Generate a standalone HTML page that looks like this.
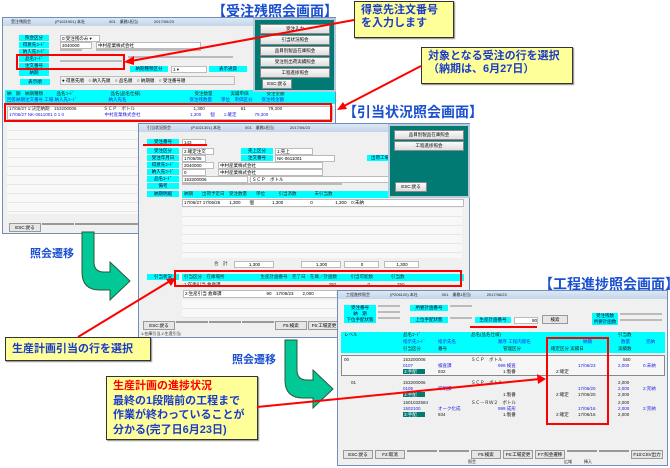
<!DOCTYPE html>
<html><head><meta charset="utf-8"><style>
*{margin:0;padding:0;box-sizing:border-box}
body{width:670px;height:468px;background:#fff;position:relative;overflow:hidden;font-family:"Liberation Sans","Noto Sans CJK JP",sans-serif}
.a{position:absolute}
.win{position:absolute;background:#f0f0f0;border:1px solid #6f8fb8}
.tb{position:absolute;left:0;right:0;top:0;height:8px;background:linear-gradient(#dce8f5,#c3d5ea);font-size:4px;line-height:8px;color:#222;padding-left:8px;white-space:nowrap}
.lb{position:absolute;background:#00ffff;font-size:4.5px;line-height:6px;text-align:center;color:#003;white-space:nowrap}
.bx{position:absolute;background:#fff;border:1px solid #bbb;font-size:4.5px;line-height:5px;padding-left:1px;white-space:nowrap}
.t{position:absolute;font-size:4.5px;line-height:6px;white-space:nowrap;color:#222}
.bl{color:#2323e0}
.hdr{position:absolute;background:#00ffff}
.btn{position:absolute;background:#e6e6e6;border:1px solid #999;font-size:4.5px;line-height:7px;text-align:center;white-space:nowrap}
.gp{position:absolute;background:#007a73;border:2px solid #b9c9d9}
.gb{position:absolute;background:linear-gradient(#fafafa,#dedede);border:1px solid #888;font-size:4.5px;text-align:center;line-height:8px}
.ttl{position:absolute;color:#1a4fd0;font-weight:bold;font-size:14px;white-space:nowrap}
.call{position:absolute;background:#ffff99;border:1px solid #333;box-shadow:1px 1px 1px #888;color:#1a3cc8;font-weight:bold;font-size:11px;line-height:13px;padding:2px 6px}
.lines{position:absolute;background:repeating-linear-gradient(#f8f8f8 0 8px,#e6e6e6 8px 9px)}
.tg{background:#007a73;color:#fff;padding:0 8px 0 1px}
</style></head><body>

<!-- window 1 -->
<div class="win" style="left:2px;top:17px;width:334px;height:217px">
 <div class="tb">受注残照会　　　　　　(P1021901) 本社　　　　　　001　業務1担当　　　　2017/06/23</div>
 <div class="lb" style="left:16px;top:17px;width:30px">照会区分</div><div class="bx" style="left:57px;top:17px;width:40px">0:受注残のみ ▾</div>
 <div class="lb" style="left:16px;top:24px;width:30px">得意先ｺｰﾄﾞ</div><div class="bx" style="left:57px;top:24px;width:32px">2040000</div><div class="bx" style="left:93px;top:24px;width:105px">中村産業株式会社</div>
 <div class="lb" style="left:16px;top:31px;width:30px">納入先ｺｰﾄﾞ</div><div class="bx" style="left:57px;top:31px;width:22px"></div><div class="bx" style="left:93px;top:31px;width:105px"></div>
 <div class="lb" style="left:16px;top:38px;width:30px">品名ｺｰﾄﾞ</div><div class="bx" style="left:125px;top:38px;width:105px;background:#f0f0f0"></div>
 <div class="lb" style="left:16px;top:45px;width:30px">注文番号</div><div class="bx" style="left:57px;top:42px;width:62px"></div>
 <div class="lb" style="left:16px;top:52px;width:30px">納期</div>
 <div class="lb" style="left:127px;top:48px;width:38px">納期種類区分</div><div class="bx" style="left:168px;top:48px;width:36px">1 ▾</div>
 <div class="lb" style="left:206px;top:48px;width:38px">表示通貨</div>
 <div class="lb" style="left:17px;top:61px;width:30px">表示順</div>
 <div class="bx" style="left:57px;top:58px;width:175px;height:9px;line-height:8px;background:#f0f0f0">● 得意先順　○ 納入先順　○ 品名順　○ 納期順　○ 受注番号順</div>
 <div class="hdr" style="left:2px;top:72px;width:330px;height:14px"></div>
 <div class="t" style="left:4px;top:73px">納　期　納期種類　　　品名ｺｰﾄﾞ　　　　　　　　品名(品名仕様)　　　　　　　　　　　　受注数量　　　　実績単価　　　　受注金額</div>
 <div class="t bl" style="left:4px;top:79px">回答納期注文番号 工場 納入先ｺｰﾄﾞ　　　　　　　納入先名　　　　　　　　　　　　　　受注残数量　　単位　単価区分　　受注残金額</div>
 <div class="bx" style="left:4px;top:88px;width:326px;height:14px;background:#fff"></div>
 <div class="t" style="left:6px;top:88px">17/06/27 1:決定納期　153200006　　　　　　ＳＣＰ　ボトル　　　　　　　　　　　　　1,300　　　　　　　　61　　　　　79,300</div>
 <div class="t bl" style="left:6px;top:94px">17/06/27 NK-0611001 0 1 0　　　　　　　　　中村産業株式会社　　　　　　　　　　　1,300　　個　　1:確定　　　　79,300</div>
 <div class="lines" style="left:4px;top:104px;width:132px;height:92px"></div>
 <div class="btn" style="left:6px;top:205px;width:32px">ESC:戻る</div>
 <div class="btn" style="left:39px;top:205px;width:32px"></div><div class="btn" style="left:72px;top:205px;width:32px"></div><div class="btn" style="left:104px;top:205px;width:32px"></div>
</div>
<div class="gp" style="left:253px;top:18px;width:83px;height:74px">
 <div class="gb" style="left:5px;top:4px;width:70px">受注入力</div>
 <div class="gb" style="left:5px;top:15px;width:70px">引当状況照会</div>
 <div class="gb" style="left:5px;top:26px;width:70px">品目別製品在庫照会</div>
 <div class="gb" style="left:5px;top:37px;width:70px">受注別出荷実績照会</div>
 <div class="gb" style="left:5px;top:48px;width:70px">工程進捗照会</div>
 <div class="gb" style="left:7px;top:59px;width:30px">ESC:戻る</div>
</div>

<!-- window 2 -->
<div class="win" style="left:138px;top:123px;width:332px;height:215px">
 <div class="tb">引当状況照会　　　　　(P1021301) 本社　　　　　　001　業務1担当　　　　2017/06/23</div>
 <div class="lb" style="left:8px;top:15px;width:32px">受注番号</div><div class="bx" style="left:43px;top:15px;width:24px">143</div>
 <div class="lb" style="left:8px;top:24px;width:32px">受注区分</div><div class="bx" style="left:43px;top:24px;width:32px">2:確定注文</div>
 <div class="lb" style="left:102px;top:24px;width:32px">売上区分</div><div class="bx" style="left:136px;top:24px;width:38px">1:売上</div>
 <div class="lb" style="left:8px;top:31px;width:32px">受注年月日</div><div class="bx" style="left:43px;top:31px;width:24px">17/06/05</div>
 <div class="lb" style="left:102px;top:31px;width:32px">注文番号</div><div class="bx" style="left:136px;top:31px;width:60px">NK-0611001</div>
 <div class="lb" style="left:228px;top:31px;width:26px">出荷工場</div>
 <div class="lb" style="left:8px;top:38px;width:32px">得意先ｺｰﾄﾞ</div><div class="bx" style="left:43px;top:38px;width:32px">2040000</div><div class="bx" style="left:79px;top:38px;width:105px">中村産業株式会社</div>
 <div class="lb" style="left:8px;top:45px;width:32px">納入先ｺｰﾄﾞ</div><div class="bx" style="left:43px;top:45px;width:24px">0</div><div class="bx" style="left:79px;top:45px;width:105px">中村産業株式会社</div>
 <div class="lb" style="left:8px;top:52px;width:32px">品名ｺｰﾄﾞ</div><div class="bx" style="left:43px;top:52px;width:66px">153200006</div><div class="bx" style="left:111px;top:52px;width:140px">ＳＣＰ　ボトル</div>
 <div class="lb" style="left:8px;top:59px;width:32px">備考</div><div class="bx" style="left:43px;top:59px;width:160px"></div>
 <div class="lb" style="left:8px;top:67px;width:32px">納期明細</div>
 <div class="hdr" style="left:43px;top:67px;width:282px;height:7px"></div>
 <div class="t" style="left:45px;top:67px">納期　　出荷予定日　受注数量　　単位　　　引当済数　　　　未引当数</div>
 <div class="bx" style="left:43px;top:75px;width:282px;height:8px;line-height:6px">17/06/27 17/06/26　　1,300　　個　　　　1,300　　　　　　0　　　　　1,300　0:未納</div>
 <div class="lines" style="left:43px;top:84px;width:280px;height:50px"></div>
 <div class="t" style="left:75px;top:137px">合　計</div>
 <div class="bx" style="left:95px;top:137px;width:40px;text-align:center">1,300</div><div class="bx" style="left:162px;top:137px;width:40px;text-align:center">1,300</div><div class="bx" style="left:205px;top:137px;width:35px;text-align:center">0</div><div class="bx" style="left:245px;top:137px;width:35px;text-align:center">1,300</div>
 <div class="lb" style="left:8px;top:150px;width:32px">引当状況</div>
 <div class="hdr" style="left:43px;top:150px;width:282px;height:7px"></div>
 <div class="t" style="left:45px;top:150px">引当区分　在庫場所　　　　　　　　生産計画番号　完了日　在庫／計画数　　　引当可能数　　　　引当数</div>
 <div class="t" style="left:45px;top:158px">1:在庫引当 倉庫課　　　　　　　　　　　　　　　　　　　　　　　　250　　　　　　　0　　　　　　250</div>
 <div class="bx" style="left:44px;top:166px;width:280px;height:8px;line-height:6px">2:生産引当 倉庫課　　　　　　　　　　90　17/06/23　　2,000　　　　　1,450　　　　　550</div>
 <div class="lines" style="left:43px;top:176px;width:280px;height:18px"></div>
 <div class="btn" style="left:4px;top:197px;width:32px">ESC:戻る</div>
 <div class="btn" style="left:37px;top:197px;width:32px"></div><div class="btn" style="left:70px;top:197px;width:32px"></div><div class="btn" style="left:103px;top:197px;width:32px"></div>
 <div class="btn" style="left:136px;top:197px;width:32px">F5:検索</div><div class="btn" style="left:169px;top:197px;width:32px">F6:工場変更</div>
 <div class="t" style="left:2px;top:207px;font-size:4px">1:在庫引当,2:生産引当</div>
</div>
<div class="gp" style="left:388px;top:124px;width:82px;height:74px">
 <div class="gb" style="left:4px;top:4px;width:70px">品目別製品在庫照会</div>
 <div class="gb" style="left:4px;top:15px;width:70px">工程進捗照会</div>
 <div class="gb" style="left:5px;top:56px;width:32px">ESC:戻る</div>
</div>

<!-- window 3 -->
<div class="win" style="left:337px;top:290px;width:331px;height:176px">
 <div class="tb">工程進捗照会　　　　　(P206120) 本社　　　　　　001　業務1担当　　　　2017/06/23</div>
 <div class="lb" style="left:6px;top:14px;width:32px">受注番号</div><div class="bx" style="left:40px;top:14px;width:22px"></div>
 <div class="lb" style="left:6px;top:20px;width:32px">納　期</div><div class="bx" style="left:40px;top:20px;width:22px"></div>
 <div class="lb" style="left:6px;top:26px;width:32px">下位手配状態</div><div class="bx" style="left:40px;top:26px;width:22px"></div>
 <div class="lb" style="left:72px;top:14px;width:38px">所要計画番号</div><div class="bx" style="left:112px;top:14px;width:22px"></div>
 <div class="lb" style="left:72px;top:26px;width:38px">上位手配状態</div><div class="bx" style="left:112px;top:26px;width:22px"></div>
 <div class="lb" style="left:137px;top:26px;width:36px">生産計画番号</div><div class="bx" style="left:176px;top:26px;width:24px;text-align:right">90</div>
 <div class="btn" style="left:204px;top:24px;width:26px">検索</div>
 <div class="lb" style="left:254px;top:22px;width:26px">受注残数</div><div class="bx" style="left:282px;top:22px;width:42px;background:#eee"></div>
 <div class="lb" style="left:254px;top:28px;width:26px">所要計画数</div><div class="bx" style="left:282px;top:28px;width:42px;background:#eee"></div>
 <div class="hdr" style="left:3px;top:41px;width:324px;height:21px"></div>
 <div class="t" style="left:6px;top:41px">レベル</div>
 <div class="t" style="left:65px;top:41px">品名ｺｰﾄﾞ</div><div class="t" style="left:133px;top:41px">品名(品名仕様)</div><div class="t" style="left:280px;top:41px">引当数</div>
 <div class="t bl" style="left:65px;top:48px">指示先ｺｰﾄﾞ</div><div class="t bl" style="left:100px;top:48px">指示先名</div><div class="t bl" style="left:160px;top:48px">順序 工程内容名</div><div class="t bl" style="left:245px;top:48px">納期</div><div class="t bl" style="left:283px;top:48px">数量</div><div class="t bl" style="left:308px;top:48px">完納</div>
 <div class="t" style="left:65px;top:55px">引当区分</div><div class="t" style="left:100px;top:55px">番号</div><div class="t" style="left:165px;top:55px">管理区分</div><div class="t" style="left:213px;top:55px">確定区分 実績日</div><div class="t" style="left:280px;top:55px">実績数</div>
 <div class="bx" style="left:3px;top:64px;width:324px;height:21px;background:#f6f6f6;border-color:#888"></div>
 <!-- row1 -->
 <div class="t" style="left:6px;top:66px">00</div><div class="t" style="left:65px;top:66px">153200006</div><div class="t" style="left:133px;top:66px">ＳＣＰ　ボトル</div><div class="t" style="left:285px;top:66px">550</div>
 <div class="t bl" style="left:65px;top:72px">0107</div><div class="t bl" style="left:100px;top:72px">検査課</div><div class="t bl" style="left:160px;top:72px">999 検査</div><div class="t bl" style="left:240px;top:72px">17/06/23</div><div class="t bl" style="left:280px;top:72px">2,000</div><div class="t bl" style="left:305px;top:72px">0:未納</div>
 <div class="t" style="left:65px;top:78px"><span class="tg">3:手配</span></div><div class="t" style="left:100px;top:78px">932</div><div class="t" style="left:165px;top:78px">1:製番</div><div class="t" style="left:218px;top:78px">2:確定</div>
 <!-- row2 -->
 <div class="t" style="left:13px;top:89px">01</div><div class="t" style="left:65px;top:89px">153200006</div><div class="t" style="left:133px;top:89px">ＳＣＰ　ボトル</div><div class="t" style="left:280px;top:89px">2,000</div>
 <div class="t bl" style="left:65px;top:95px">0105</div><div class="t bl" style="left:100px;top:95px">印刷課</div><div class="t bl" style="left:240px;top:95px">17/06/20</div><div class="t bl" style="left:280px;top:95px">2,000</div><div class="t bl" style="left:305px;top:95px">2:完納</div>
 <div class="t" style="left:65px;top:101px"><span class="tg">3:手配</span></div><div class="t" style="left:165px;top:101px">1:製番</div><div class="t" style="left:218px;top:101px">2:確定</div><div class="t" style="left:240px;top:101px">17/06/20</div><div class="t" style="left:280px;top:101px">2,000</div>
 <!-- row3 -->
 <div class="t" style="left:65px;top:109px">1501032584</div><div class="t" style="left:133px;top:109px">ＳＣ－ＲＷ２　ボトル</div><div class="t" style="left:280px;top:109px">2,000</div>
 <div class="t bl" style="left:65px;top:115px">1502100</div><div class="t bl" style="left:100px;top:115px">オーク化成</div><div class="t bl" style="left:160px;top:115px">999 成形</div><div class="t bl" style="left:240px;top:115px">17/06/16</div><div class="t bl" style="left:280px;top:115px">2,000</div><div class="t bl" style="left:305px;top:115px">2:完納</div>
 <div class="t" style="left:65px;top:121px"><span class="tg">3:手配</span></div><div class="t" style="left:100px;top:121px">934</div><div class="t" style="left:165px;top:121px">1:製番</div><div class="t" style="left:218px;top:121px">2:確定</div><div class="t" style="left:240px;top:121px">17/06/16</div><div class="t" style="left:280px;top:121px">2,000</div>
 <div class="btn" style="left:5px;top:159px;width:30px">ESC:戻る</div><div class="btn" style="left:37px;top:159px;width:30px">F2:取消</div>
 <div class="btn" style="left:69px;top:159px;width:30px"></div><div class="btn" style="left:101px;top:159px;width:30px"></div>
 <div class="btn" style="left:133px;top:159px;width:30px">F5:検索</div><div class="btn" style="left:165px;top:159px;width:30px">F6:工場変更</div><div class="btn" style="left:197px;top:159px;width:30px">F7:照会遷移</div>
 <div class="btn" style="left:229px;top:159px;width:30px"></div><div class="btn" style="left:261px;top:159px;width:30px"></div><div class="btn" style="left:293px;top:159px;width:32px">F10:CSV出力</div>
 <div class="t" style="left:130px;top:168px;font-size:4px">照会　　　　　　　　　　　　　　　　　　　　　　広域　　　挿入</div>
</div>

<!-- titles -->
<div class="ttl" style="left:212px;top:1px">【受注残照会画面】</div>
<div class="ttl" style="left:343px;top:102px">【引当状況照会画面】</div>
<div class="ttl" style="left:539px;top:274px">【工程進捗照会画面】</div>

<!-- callouts -->
<div class="call" style="left:354px;top:1px;width:100px;height:37px">得意先注文番号<br>を入力します</div>
<div class="call" style="left:421px;top:47px;width:152px;height:37px">対象となる受注の行を選択<br>（納期は、6月27日）</div>
<div class="call" style="left:5px;top:337px;width:146px;height:24px;line-height:18px">生産計画引当の行を選択</div>
<div class="call" style="left:106px;top:376px;width:152px;height:64px;line-height:14.5px"><span style="color:#f00">生産計画の進捗状況</span><br>最終の1段階前の工程まで<br>作業が終わっていることが<br>分かる(完了日6月23日)</div>
<div class="a" style="left:30px;top:245px;color:#1a4fd0;font-weight:bold;font-size:11px">照会遷移</div>
<div class="a" style="left:232px;top:351px;color:#1a4fd0;font-weight:bold;font-size:11px">照会遷移</div>

<svg class="a" style="left:0;top:0" width="670" height="468">
 <path d="M82 232 L94 232 L94 262 Q94 272 104 272 L110 272 L110 262 L130 281 L110 300 L110 290 L100 290 Q82 290 82 272 Z" fill="#00c896" stroke="#2a5a3a" stroke-width="1"/>
 <path d="M285 340 L297 340 L297 370 Q297 380 307 380 L313 380 L313 370 L333 389 L313 408 L313 398 L303 398 Q285 398 285 380 Z" fill="#00c896" stroke="#2a5a3a" stroke-width="1"/>
 <g stroke="#f00" stroke-width="2" fill="none">
  <rect x="17" y="55" width="107" height="14"/>
  <rect x="5" y="104" width="326" height="17"/>
  <rect x="175" y="271" width="286" height="15"/>
  <rect x="547" y="338" width="61" height="86"/>
  <line x1="354" y1="20" x2="131" y2="61"/>
  <line x1="421" y1="66" x2="342" y2="107"/>
  <line x1="78" y1="337" x2="170" y2="281"/>
  <line x1="257" y1="407" x2="540" y2="379"/>
  <line x1="143" y1="145" x2="207" y2="145"/>
  <line x1="470" y1="327" x2="537" y2="327"/>
 </g>
 <g fill="#f00">
  <polygon points="124,62 134,56 134,65"/>
  <polygon points="337,110 343,102 347,109"/>
  <polygon points="176,278 166,279 171,286"/>
  <polygon points="546,379 537,374 538,384"/>
 </g>
</svg>
</body></html>
